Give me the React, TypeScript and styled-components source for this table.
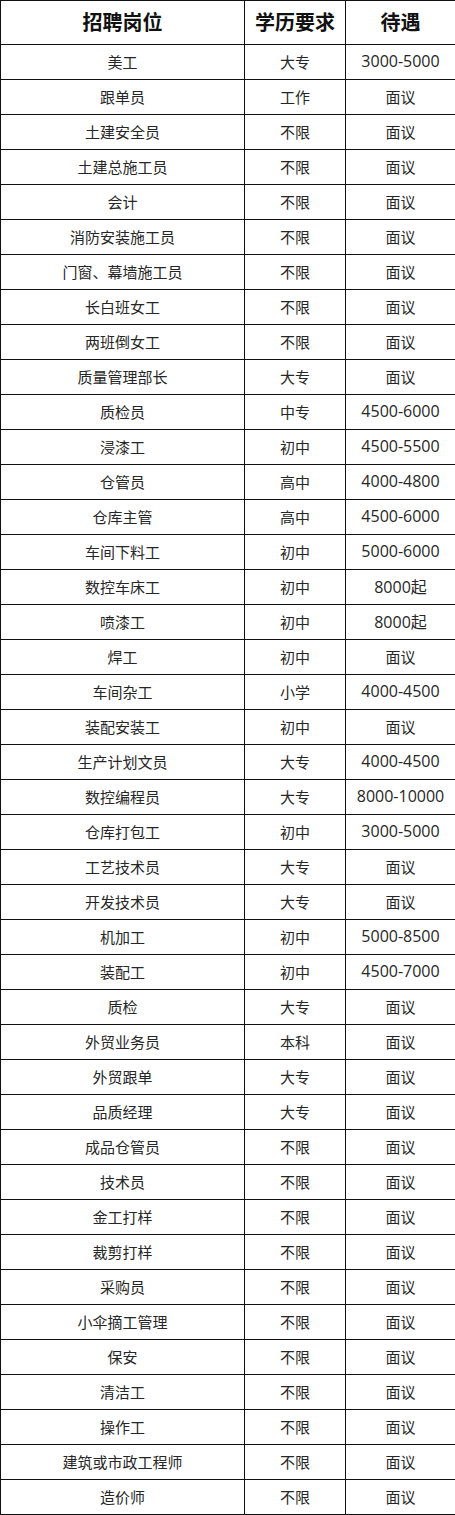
import React from 'react';
import styled, { createGlobalStyle } from 'styled-components';

const GlobalStyle = createGlobalStyle`
  html, body {
    margin: 0;
    padding: 0;
    background: #fff;
  }
`;

const Table = styled.table`
  width: 455px;
  border-collapse: collapse;
  table-layout: fixed;
  font-family: "Noto Sans CJK SC", "Microsoft YaHei", sans-serif;
  color: #262626;
`;

const Col = styled.col<{ w: number }>`
  width: ${(p) => p.w}px;
`;

const HeadCell = styled.th`
  height: 41px;
  padding: 0 0 2px;
  border: 1px solid #111;
  font-size: 20px;
  font-weight: 700;
  color: #111;
  text-align: center;
  vertical-align: middle;
`;

const Cell = styled.td<{ num?: boolean }>`
  height: 32px;
  padding: 0 0 2px;
  border: 1px solid #111;
  font-family: ${(p) =>
    p.num ? '"Open Sans", "Noto Sans CJK SC", sans-serif' : 'inherit'};
  font-size: ${(p) => (p.num ? 16 : 15)}px;
  text-align: center;
  vertical-align: middle;
  white-space: nowrap;
`;

const rows: [string, string, string][] = [
  ['美工', '大专', '3000-5000'],
  ['跟单员', '工作', '面议'],
  ['土建安全员', '不限', '面议'],
  ['土建总施工员', '不限', '面议'],
  ['会计', '不限', '面议'],
  ['消防安装施工员', '不限', '面议'],
  ['门窗、幕墙施工员', '不限', '面议'],
  ['长白班女工', '不限', '面议'],
  ['两班倒女工', '不限', '面议'],
  ['质量管理部长', '大专', '面议'],
  ['质检员', '中专', '4500-6000'],
  ['浸漆工', '初中', '4500-5500'],
  ['仓管员', '高中', '4000-4800'],
  ['仓库主管', '高中', '4500-6000'],
  ['车间下料工', '初中', '5000-6000'],
  ['数控车床工', '初中', '8000起'],
  ['喷漆工', '初中', '8000起'],
  ['焊工', '初中', '面议'],
  ['车间杂工', '小学', '4000-4500'],
  ['装配安装工', '初中', '面议'],
  ['生产计划文员', '大专', '4000-4500'],
  ['数控编程员', '大专', '8000-10000'],
  ['仓库打包工', '初中', '3000-5000'],
  ['工艺技术员', '大专', '面议'],
  ['开发技术员', '大专', '面议'],
  ['机加工', '初中', '5000-8500'],
  ['装配工', '初中', '4500-7000'],
  ['质检', '大专', '面议'],
  ['外贸业务员', '本科', '面议'],
  ['外贸跟单', '大专', '面议'],
  ['品质经理', '大专', '面议'],
  ['成品仓管员', '不限', '面议'],
  ['技术员', '不限', '面议'],
  ['金工打样', '不限', '面议'],
  ['裁剪打样', '不限', '面议'],
  ['采购员', '不限', '面议'],
  ['小伞摘工管理', '不限', '面议'],
  ['保安', '不限', '面议'],
  ['清洁工', '不限', '面议'],
  ['操作工', '不限', '面议'],
  ['建筑或市政工程师', '不限', '面议'],
  ['造价师', '不限', '面议'],
];

export default function App() {
  return (
    <>
      <GlobalStyle />
      <Table>
        <colgroup>
          <Col w={244} />
          <Col w={101} />
          <Col w={110} />
        </colgroup>
        <thead>
          <tr>
            <HeadCell>招聘岗位</HeadCell>
            <HeadCell>学历要求</HeadCell>
            <HeadCell>待遇</HeadCell>
          </tr>
        </thead>
        <tbody>
          {rows.map(([job, edu, pay]) => (
            <tr key={job}>
              <Cell>{job}</Cell>
              <Cell>{edu}</Cell>
              <Cell num={/\d/.test(pay)}>{pay}</Cell>
            </tr>
          ))}
        </tbody>
      </Table>
    </>
  );
}
